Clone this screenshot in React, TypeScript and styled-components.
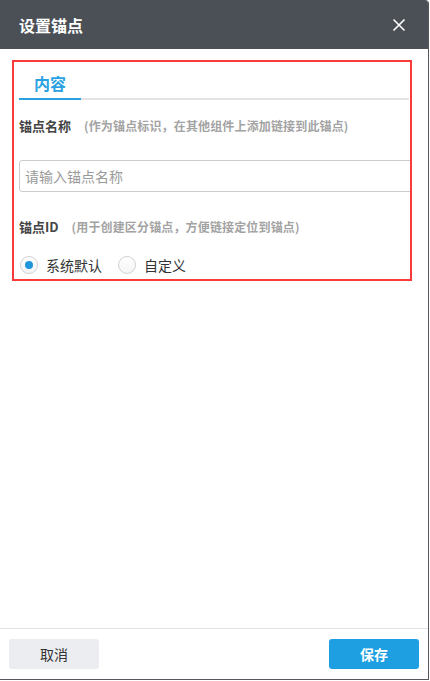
import { useState } from "react";
import styled, { createGlobalStyle } from "styled-components";

const GlobalStyle = createGlobalStyle`
    html, body {
        margin: 0;
        padding: 0;
        background: #fff;
    }
    * {
        box-sizing: border-box;
    }
    body {
        font-family: "Noto Sans CJK SC", "Noto Sans", "Liberation Sans", sans-serif;
        color: #333;
    }
`;

const Dialog = styled.div`
    width: 429px;
    height: 680px;
    display: flex;
    flex-direction: column;
    background: #fff;
    border-right: 1px solid #55595f;
    border-bottom: 1px solid #55595f;
    border-top-right-radius: 4px;
    overflow: hidden;
`;

const Header = styled.div`
    height: 49px;
    flex: none;
    display: flex;
    align-items: center;
    justify-content: space-between;
    padding: 0 22px 0 19px;
    background: #4b4f56;
`;

const Title = styled.div`
    color: #fff;
    font-size: 16px;
    font-weight: 700;
    line-height: 20px;
`;

const CloseButton = styled.button`
    border: none;
    background: none;
    padding: 0;
    width: 14px;
    height: 14px;
    display: flex;
    cursor: pointer;
`;

const Body = styled.div`
    flex: 1;
    padding-top: 11px;
`;

const Frame = styled.div`
    margin: 0 16px 0 12px;
    border: 2px solid #fb3a3a;
    padding: 0 1px 5px 5px;
    overflow: hidden;
`;

const Tabs = styled.div`
    display: flex;
    height: 38px;
    border-bottom: 2px solid #e4e4e4;
`;

const Tab = styled.div<{ $active?: boolean }>`
    width: 62px;
    display: flex;
    align-items: center;
    justify-content: center;
    font-size: 16px;
    font-weight: 700;
    color: ${p => p.$active ? '#2aa2e2' : '#666'};
    margin-bottom: -2px;
    border-bottom: 2px solid ${p => p.$active ? '#2aa2e2' : 'transparent'};
    padding-top: 6px;
`;

const Label = styled.div<{ $gap: number }>`
    margin-top: ${p => p.$gap}px;
    display: flex;
    align-items: center;
    line-height: 16px;
    font-size: 13px;
    font-weight: 700;
    color: #444;
`;

const Hint = styled.span`
    margin-left: 13px;
    font-size: 12px;
    font-weight: 700;
    color: #a3a3a3;
    letter-spacing: 0.15px;
`;

const Input = styled.input`
    display: block;
    width: calc(100% + 4px);
    height: 32px;
    margin-top: 26px;
    border: 1px solid #cdcdcd;
    border-radius: 3px;
    padding: 0 5px;
    font-family: inherit;
    font-size: 14px;
    color: #333;
    outline: none;
    &::placeholder {
        color: #9a9a9a;
    }
`;

const RadioGroup = styled.div`
    display: flex;
    align-items: center;
    gap: 15px;
    margin-top: 21px;
    height: 18px;
`;

const RadioItem = styled.label`
    display: flex;
    align-items: center;
    gap: 8px;
    font-size: 14px;
    color: #333;
    cursor: pointer;
`;

const RadioCircle = styled.span<{ $checked?: boolean }>`
    width: 18px;
    height: 18px;
    margin-left: 1px;
    border-radius: 50%;
    border: 1px solid #d2d2d2;
    background: linear-gradient(#fff, #f4f4f4);
    display: flex;
    align-items: center;
    justify-content: center;
    &::after {
        content: "";
        width: 8px;
        height: 8px;
        border-radius: 50%;
        background: ${p => p.$checked ? '#1f95dc' : 'transparent'};
    }
`;

const Footer = styled.div`
    flex: none;
    height: 51px;
    border-top: 1px solid #e3e3e3;
    display: flex;
    align-items: flex-start;
    justify-content: space-between;
    padding: 10px 9px 0 9px;
`;

const FooterButton = styled.button<{ $primary?: boolean }>`
    width: 90px;
    height: 30px;
    border: none;
    border-radius: 3px;
    font-family: inherit;
    font-size: 14px;
    font-weight: ${p => p.$primary ? 700 : 400};
    background: ${p => p.$primary ? '#1e9fe1' : '#ebedf1'};
    color: ${p => p.$primary ? '#fff' : '#333'};
    cursor: pointer;
`;

const CloseIcon = () => (
    <svg width="14" height="14" viewBox="0 0 14 14">
        <path d="M1.5 1.5 L12.5 12.5 M12.5 1.5 L1.5 12.5" stroke="#fff" strokeWidth="1.6" fill="none" />
    </svg>
);

export default function App() {
    const [mode, setMode] = useState<'default' | 'custom'>('default');
    return (
        <>
            <GlobalStyle />
            <Dialog>
                <Header>
                    <Title>设置锚点</Title>
                    <CloseButton aria-label="关闭"><CloseIcon /></CloseButton>
                </Header>
                <Body>
                    <Frame>
                        <Tabs>
                            <Tab $active>内容</Tab>
                        </Tabs>
                        <Label $gap={18}>
                            锚点名称<Hint>(作为锚点标识，在其他组件上添加链接到此锚点)</Hint>
                        </Label>
                        <Input placeholder="请输入锚点名称" />
                        <Label $gap={27}>
                            锚点ID<Hint>(用于创建区分锚点，方便链接定位到锚点)</Hint>
                        </Label>
                        <RadioGroup>
                            <RadioItem onClick={() => setMode('default')}>
                                <RadioCircle $checked={mode === 'default'} />
                                系统默认
                            </RadioItem>
                            <RadioItem onClick={() => setMode('custom')}>
                                <RadioCircle $checked={mode === 'custom'} />
                                自定义
                            </RadioItem>
                        </RadioGroup>
                    </Frame>
                </Body>
                <Footer>
                    <FooterButton>取消</FooterButton>
                    <FooterButton $primary>保存</FooterButton>
                </Footer>
            </Dialog>
        </>
    );
}
